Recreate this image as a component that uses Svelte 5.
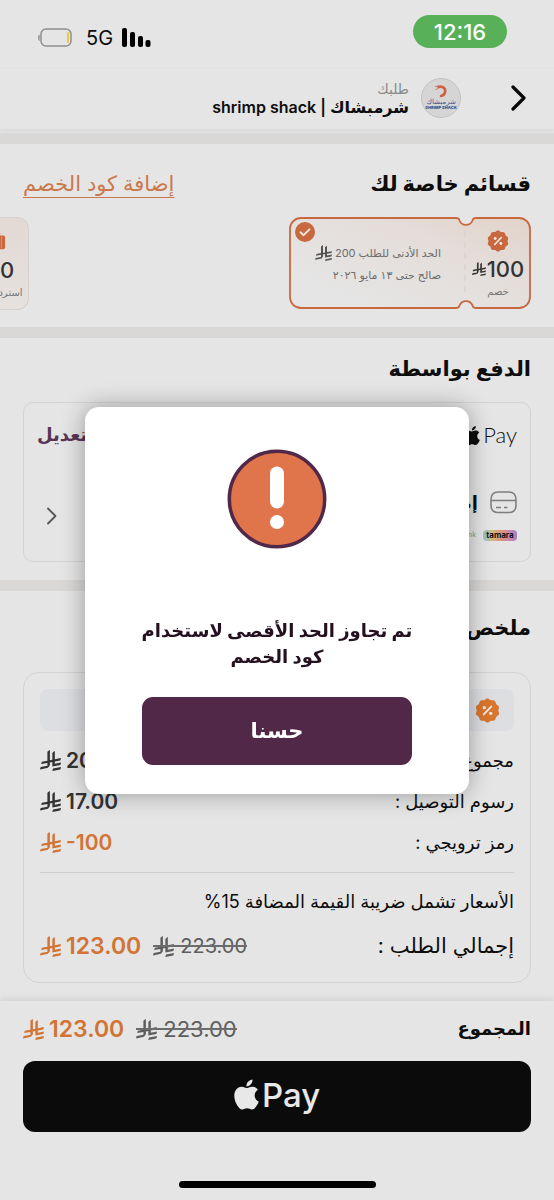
<script>
  const promoCoupon = { amount: '100', caption: 'خصم' };
  const cashCoupon = { amount: '10', caption: 'استرداد نقدي' };

  const charges = [
    { label: 'مجموع الطلب :', value: '206.00' },
    { label: 'رسوم التوصيل :', value: '17.00' },
    { label: 'رمز ترويجي :', value: '-100', accent: true }
  ];

  // Scalloped outline of the discount badge.
  const scallop = (() => {
    let d = '';
    for (let i = 0; i < 120; i++) {
      const t = (i / 120) * Math.PI * 2;
      const r = 11 + 0.6 * Math.cos(t * 10);
      d += (i ? 'L' : 'M') + (12 + r * Math.sin(t)).toFixed(2) + ' ' + (12 - r * Math.cos(t)).toFixed(2);
    }
    return d + 'Z';
  })();

  let dialogOpen = $state(true);
</script>

{#snippet riyal()}
  <svg class="riyal" viewBox="0 0 1124 1256" preserveAspectRatio="none" aria-hidden="true">
    <path d="M699.62,1113.02c-20.06,44.48-33.32,92.75-38.4,143.37l424.51-90.24c20.06-44.47,33.31-92.75,38.4-143.37l-424.51,90.24Z" />
    <path d="M1085.73,895.8c20.06-44.47,33.32-92.75,38.4-143.37l-330.68,70.33v-135.2l292.27-62.11c20.06-44.47,33.32-92.75,38.4-143.37l-330.68,70.27V66.13c-50.67,28.45-95.67,66.32-132.25,110.99v403.35l-132.25,28.11V0c-50.67,28.44-95.67,66.32-132.25,110.99v525.69l-295.91,62.88c-20.06,44.47-33.33,92.75-38.42,143.37l334.33-71.05v170.26l-358.3,76.14c-20.06,44.47-33.32,92.75-38.4,143.37l375.04-79.7c30.53-6.35,56.77-24.4,73.83-49.24l68.78-101.97c7.14-10.55,11.3-23.27,11.3-36.97v-149.98l132.25-28.11v270.4l424.53-90.28Z" />
  </svg>
{/snippet}

{#snippet apple()}
  <svg class="apple" viewBox="2 0 20 24" aria-hidden="true">
    <path d="M12.152 6.896c-.948 0-2.415-1.078-3.96-1.04-2.04.027-3.91 1.183-4.961 3.014-2.117 3.675-.546 9.103 1.519 12.09 1.013 1.454 2.208 3.09 3.792 3.039 1.52-.065 2.09-.987 3.935-.987 1.831 0 2.35.987 3.96.948 1.637-.026 2.676-1.48 3.676-2.948 1.156-1.688 1.636-3.325 1.662-3.415-.039-.013-3.182-1.221-3.22-4.857-.026-3.04 2.48-4.494 2.597-4.559-1.429-2.09-3.623-2.324-4.39-2.376-2-.156-3.675 1.09-4.61 1.09zM15.53 3.83c.843-1.012 1.4-2.427 1.245-3.83-1.207.052-2.662.805-3.532 1.818-.78.896-1.454 2.338-1.273 3.714 1.338.104 2.715-.688 3.559-1.701" />
  </svg>
{/snippet}

{#snippet badge()}
  <svg class="badge" viewBox="0 0 24 24" aria-hidden="true">
    <path d={scallop} fill="currentColor" />
    <path d="M8.4 15.8 15.6 8.2" stroke="#f3e9e3" stroke-width="1.8" stroke-linecap="round" />
    <circle cx="8.9" cy="9.3" r="1.6" fill="#f3e9e3" />
    <circle cx="15.1" cy="14.7" r="1.6" fill="#f3e9e3" />
  </svg>
{/snippet}

<div class="screen" dir="rtl" lang="ar">
  <div class="status" dir="ltr">
    <svg class="battery" width="34" height="20" viewBox="0 0 34 20" aria-hidden="true">
      <rect x="3" y="1" width="30" height="17" rx="5" fill="none" stroke="#8f8f8f" stroke-width="1.5" />
      <path d="M0 9.500Q0 7 1.600 6.500V13Q0 12.500 0 9.500Z" fill="#8f8f8f" />
      <rect x="29" y="4" width="2" height="11" rx="1" fill="#f0c93a" />
    </svg>
    <span class="net">5G</span>
    <svg width="29" height="20" viewBox="0 0 29 20" aria-hidden="true">
      <rect x="0" y="0" width="5" height="19" rx="2" />
      <rect x="8" y="4" width="5" height="15" rx="2" />
      <rect x="16" y="8" width="5" height="11" rx="2" />
      <rect x="23.500" y="12" width="5" height="7" rx="2" />
    </svg>
    <span class="time">12:16</span>
  </div>

  <header>
    <button class="back" aria-label="رجوع">
      <svg width="15" height="26" viewBox="0 0 15 26" aria-hidden="true">
        <path d="M2 2 13 13 2 24" fill="none" stroke="#0a0a0a" stroke-width="3.200" stroke-linecap="round" stroke-linejoin="round" />
      </svg>
    </button>
    <div class="logo">
      <svg width="12" height="13" viewBox="0 0 12 13" aria-hidden="true">
        <path d="M3.500 2Q5 1.200 7.500 2 11 3.500 10 7.500 9 10.500 6 11" fill="none" stroke="#cf6142" stroke-width="2.600" stroke-linecap="round" />
        <path d="M0 1.500 4 1M.5 4.500 3.500 3.500" stroke="#cf6142" stroke-width=".8" />
      </svg>
      <span class="logo-ar">شرمبشاك</span>
      <span class="logo-en">SHRIMP SHACK</span>
    </div>
    <div class="store">
      <span class="sub">طلبك</span>
      <strong>شرمبشاك | shrimp shack</strong>
    </div>
  </header>

  <section class="coupons">
    <div class="head">
      <h2>قسائم خاصة لك</h2>
      <a href="#code">إضافة كود الخصم</a>
    </div>
    <div class="row">
      <article class="coupon">
        <svg class="shape" viewBox="0 0 242 93" aria-hidden="true">
          <defs>
            <linearGradient id="peach" x1="1" y1="0" x2=".1" y2=".8">
              <stop offset="0" stop-color="#e2d3ca" />
              <stop offset=".45" stop-color="#e4dedb" />
              <stop offset="1" stop-color="#e5e5e5" />
            </linearGradient>
          </defs>
          <path d="M12 1H167C170 1 170 2 170.500 3.500A7 7 0 0 0 183.500 3.500C184 2 184 1 187 1H230A11 11 0 0 1 241 12V80A11 11 0 0 1 230 91H187C184 91 184 90 183.500 88.500A7 7 0 0 0 170.500 88.500C170 90 170 91 167 91H12A11 11 0 0 1 1 80V12A11 11 0 0 1 12 1Z" fill="url(#peach)" stroke="#c8683f" stroke-width="1.800" />
          <path d="M176 14V80" stroke="#d3cdca" stroke-dasharray="6 5" />
        </svg>
        <div class="stub">
          {@render badge()}
          <span class="amount" dir="ltr">{@render riyal()}{promoCoupon.amount}</span>
          <small>{promoCoupon.caption}</small>
        </div>
        <div class="terms">
          <span class="min">الحد الأدنى للطلب 200 {@render riyal()}</span>
          <span>صالح حتى ١٣ مايو ٢٠٢٦</span>
        </div>
        <svg class="tick" width="20" height="20" viewBox="0 0 20 20" aria-hidden="true">
          <circle cx="10" cy="10" r="10" fill="#c8683f" />
          <path d="M5.500 10.300 8.600 13.200 14.500 7.300" fill="none" stroke="#f3e9e3" stroke-width="1.900" stroke-linecap="round" stroke-linejoin="round" />
        </svg>
      </article>
      <article class="peek">
        <div class="stub">
          <svg class="badge" viewBox="0 0 24 24" aria-hidden="true">
            <path d="M7 6V3q0-1.500 1.500-1.500h7Q17 1.500 17 3v3" fill="none" stroke="#dd9c7c" stroke-width="1.500" />
            <rect x="1" y="5" width="22" height="15" rx="2" fill="currentColor" />
            <path d="M19 6v13" stroke="#e0956f" />
          </svg>
          <span class="amount" dir="ltr">{@render riyal()}{cashCoupon.amount}</span>
          <small>{cashCoupon.caption}</small>
        </div>
      </article>
    </div>
  </section>

  <section class="payment">
    <h2>الدفع بواسطة</h2>
    <div class="card">
      <div class="line">
        <span class="applepay" dir="ltr">{@render apple()}Pay</span>
        <button class="edit">تعديل</button>
      </div>
      <div class="line other">
        <div class="methods">
          <div class="method">
            <svg width="27" height="24" viewBox="0 0 27 24" fill="none" stroke="#7d7d7d" aria-hidden="true">
              <path d="M1 9Q1 1 8 1H19Q26 1 26 9V14Q26 21.500 19 21.500H8Q1 21.500 1 14Z" stroke-width="1.500" />
              <path d="M1 9.500H26M6 16.500h5M14 16.500h3.500" stroke-width="1.500" />
            </svg>
            <strong>إضافة</strong>
          </div>
          <div class="brands" dir="ltr">
            <span class="bank">bank</span>
            <span class="tamara">tamara</span>
          </div>
        </div>
        <svg class="go" width="11" height="18" viewBox="0 0 11 18" aria-hidden="true">
          <path d="M2 1.500 9.500 9 2 16.500" fill="none" stroke="#555" stroke-width="1.800" stroke-linecap="round" stroke-linejoin="round" />
        </svg>
      </div>
    </div>
  </section>

  <section class="summary">
    <h2>ملخص الطلب</h2>
    <div class="card">
      <div class="promo">{@render badge()}</div>
      <dl>
        {#each charges as c}
          <div class="charge" class:accent={c.accent}>
            <dt>{c.label}</dt>
            <dd dir="ltr">{@render riyal()}{c.value}</dd>
          </div>
        {/each}
      </dl>
      <hr />
      <p>الأسعار تشمل ضريبة القيمة المضافة 15%</p>
      <div class="total">
        <span>إجمالي الطلب :</span>
        <div class="prices" dir="ltr">
          <b>{@render riyal()}123.00</b>
          <s>{@render riyal()}223.00</s>
        </div>
      </div>
    </div>
  </section>

  <footer>
    <div class="sum">
      <strong>المجموع</strong>
      <div class="prices" dir="ltr">
        <b>{@render riyal()}123.00</b>
        <s>{@render riyal()}223.00</s>
      </div>
    </div>
    <button class="pay" dir="ltr">{@render apple()}Pay</button>
    <div class="home"></div>
  </footer>

  {#if dialogOpen}
    <div class="overlay">
      <div class="dialog" role="alertdialog" aria-modal="true" aria-labelledby="msg">
        <svg width="100" height="100" viewBox="0 0 100 100" aria-hidden="true">
          <circle cx="50" cy="50" r="47.700" fill="#e0744a" stroke="#512847" stroke-width="3.500" />
          <rect x="43" y="17.500" width="14" height="42" rx="7" fill="#fff" />
          <circle cx="50" cy="73" r="7" fill="#fff" />
        </svg>
        <p id="msg">تم تجاوز الحد الأقصى لاستخدام كود الخصم</p>
        <button onclick={() => (dialogOpen = false)}>حسنا</button>
      </div>
    </div>
  {/if}
</div>

<style>
  :global(body) { background: #e5e5e5; }
  .screen, .screen * { box-sizing: border-box; }
  .screen {
    min-height: 100vh;
    display: flex;
    flex-direction: column;
    overflow-x: hidden;
    background: #e5e5e5;
    color: #0d0d0d;
    font-family: Inter, "DejaVu Sans", sans-serif;
    font-size: 16px;
    line-height: 24px;
  }
  button { font: inherit; color: inherit; border: 0; background: none; padding: 0; cursor: pointer; }
  h2, p, dl, dd { margin: 0; }
  h2 { font-size: 21px; line-height: 32px; font-weight: 700; }
  .riyal, .apple { fill: currentColor; flex: none; }
  .riyal { width: 21px; height: 21px; }

  .status { height: 68px; display: flex; align-items: center; padding: 7px 47px 0 38px; }
  .net { font-size: 20px; margin: 0 9px 0 14px; }
  .time {
    margin: -12px 0 0 auto;
    width: 94px;
    padding-top: 1px;
    border-radius: 17px;
    background: #58b058;
    color: #fff;
    font-size: 22px;
    line-height: 32px;
    font-weight: 500;
    text-align: center;
  }

  header {
    height: 61px;
    display: flex;
    align-items: center;
    padding: 0 28px 3px;
    border-top: 1px solid #e1e1e1;
    box-shadow: 0 2px 4px #0000000f;
  }
  .back { display: flex; }
  .logo {
    width: 40px;
    height: 40px;
    margin: 0 50px 0 12px;
    flex: none;
    border: 1px solid #c2c2c2;
    border-radius: 50%;
    background: #d5d5d5;
    display: flex;
    flex-direction: column;
    align-items: center;
    justify-content: center;
    color: #3d5c92;
    white-space: nowrap;
  }
  .logo-ar { font-size: 7px; line-height: 7px; }
  .logo-en { font-size: 4px; line-height: 6px; font-weight: 900; }
  .store { display: flex; flex-direction: column; line-height: 18px; }
  .store strong { font-size: 16px; font-weight: 600; }
  .sub { font-size: 14px; color: #8a8a8a; }

  section { border-top: 11px solid #d9d8d7; padding: 0 23px 18px; }
  .head { display: flex; justify-content: space-between; align-items: center; }
  .head a { color: #ca784c; font-size: 21px; line-height: 32px; text-decoration-thickness: 1px; text-underline-offset: 6px; }

  .coupons { margin-top: 4px; padding: 24px 23px 17px; }
  .row { display: flex; justify-content: space-between; margin: 17px 0 0 -23px; }
  .coupon { position: relative; width: 242px; height: 93px; display: flex; flex: none; }
  .shape { position: absolute; inset: 0; }
  .stub {
    position: relative;
    width: 66px;
    flex: none;
    padding-top: 12px;
    display: flex;
    flex-direction: column;
    align-items: center;
    color: #333;
  }
  .stub .badge { width: 22px; height: 24px; color: #c8683f; }
  .amount { display: flex; align-items: center; gap: 1px; font-size: 22px; line-height: 32px; font-weight: 500; }
  .amount .riyal { width: 14px; height: 14px; }
  .stub small { font-size: 10px; line-height: 12px; color: #777; white-space: nowrap; }
  .terms {
    position: relative;
    padding: 25px 24px 0 0;
    display: flex;
    flex-direction: column;
    font-size: 11px;
    line-height: 22px;
    color: #6d6d6d;
    white-space: nowrap;
  }
  .min { display: flex; align-items: center; gap: 3px; }
  .min .riyal { width: 17px; height: 16px; color: #555; }
  .tick { position: absolute; left: 6px; top: 5px; }
  .peek {
    width: 29px;
    overflow: hidden;
    border: 1px solid #d6cfcb;
    border-left: 0;
    border-radius: 0 12px 12px 0;
    background: linear-gradient(#e3d9d4, #e5e1df);
  }

  .card { border: 1px solid #d3d3d6; }
  .payment { padding-top: 15px; }
  .payment .card { margin-top: 17px; height: 160px; border-radius: 10px; padding: 16px 13px; }
  .line { display: flex; justify-content: space-between; align-items: center; }
  .applepay { display: flex; align-items: center; font: 300 22px/32px Lato, sans-serif; }
  .applepay .apple { width: 16px; height: 19px; margin-right: 3px; }
  .edit { color: #5a3553; font-size: 18px; font-weight: 700; }
  .other { margin-top: 40px; padding-left: 9px; }
  .method { display: flex; align-items: center; gap: 12px; }
  .method strong { font-size: 18px; }
  .brands { display: flex; align-items: center; justify-content: flex-end; gap: 7px; margin-top: 14px; }
  .bank { font-size: 7px; line-height: 12px; color: #6ba395; }
  .tamara {
    width: 34px;
    border-radius: 4px;
    background: linear-gradient(90deg, #8ac5d6, #d6bb80 28%, #dd8f75 55%, #c886b5 80%, #a07fc0);
    font: 700 8px/11px Inter, sans-serif;
    color: #111;
    text-align: center;
  }

  .summary { padding-top: 21px; }
  .summary .card { margin-top: 28px; border-radius: 16px; padding: 16px 16px 21px; }
  .promo { height: 42px; border-radius: 8px; background: #dcdee2; padding: 0 14px; display: flex; align-items: center; }
  .promo .badge { width: 25px; height: 25px; color: #d9762f; }
  dl { padding-top: 9px; }
  .charge { display: flex; justify-content: space-between; align-items: center; height: 41px; }
  .charge dt { font-size: 18px; }
  .charge dd { display: flex; align-items: center; gap: 5px; font-size: 21px; font-weight: 600; color: #333; }
  .charge.accent dd { color: #d17435; }
  hr { border: 0; border-top: 1px solid #cdcdcd; margin: 9px 0 16px; }
  .card p { font-size: 18px; line-height: 26px; }
  .total { margin-top: 15px; display: flex; justify-content: space-between; align-items: center; font-size: 21px; line-height: 32px; }
  .summary .card { padding-bottom: 20px; }
  .prices { display: flex; gap: 12px; font-size: 23px; line-height: 32px; }
  .prices b { display: flex; align-items: center; gap: 5px; font-weight: 600; color: #d17435; }
  .prices s { position: relative; display: flex; align-items: center; gap: 6px; color: #5d5d5d; font-size: 20px; text-decoration: none; }
  .sum .prices s { font-size: 22px; }
  .prices s::after { content: ""; position: absolute; inset: 15px 0 auto; border-top: 2px solid #6c6c6c; }

  footer {
    margin-top: auto;
    padding: 12px 23px;
    height: 199px;
    display: flex;
    flex-direction: column;
    box-shadow: 0 -3px 6px #00000012;
  }
  .sum { display: flex; justify-content: space-between; align-items: center; }
  .sum strong { font-size: 18px; }
  .pay {
    margin-top: 16px;
    height: 71px;
    padding-bottom: 4px;
    border-radius: 12px;
    background: #0b0b0b;
    color: #e8e8e8;
    display: flex;
    align-items: center;
    justify-content: center;
    gap: 3px;
    font-size: 33px;
    font-weight: 500;
  }
  .pay .apple { width: 25px; height: 31px; }
  .home { width: 197px; height: 7px; border-radius: 4px; background: #000; margin: auto auto 0; }

  .overlay { position: fixed; inset: 0; display: flex; align-items: center; justify-content: center; }
  .dialog {
    width: 384px;
    max-width: calc(100% - 40px);
    padding: 42px 57px 29px;
    border-radius: 14px;
    background: #fff;
    box-shadow: 0 0 24px #00000055;
    display: flex;
    flex-direction: column;
    align-items: center;
    text-align: center;
  }
  .dialog p { margin: 69px -10px 0; font-size: 18px; line-height: 26px; font-weight: 700; color: #24101f; }
  .dialog button {
    align-self: stretch;
    height: 68px;
    margin-top: 27px;
    border-radius: 11px;
    background: #512847;
    color: #fff;
    font-size: 21px;
    font-weight: 700;
  }
</style>
